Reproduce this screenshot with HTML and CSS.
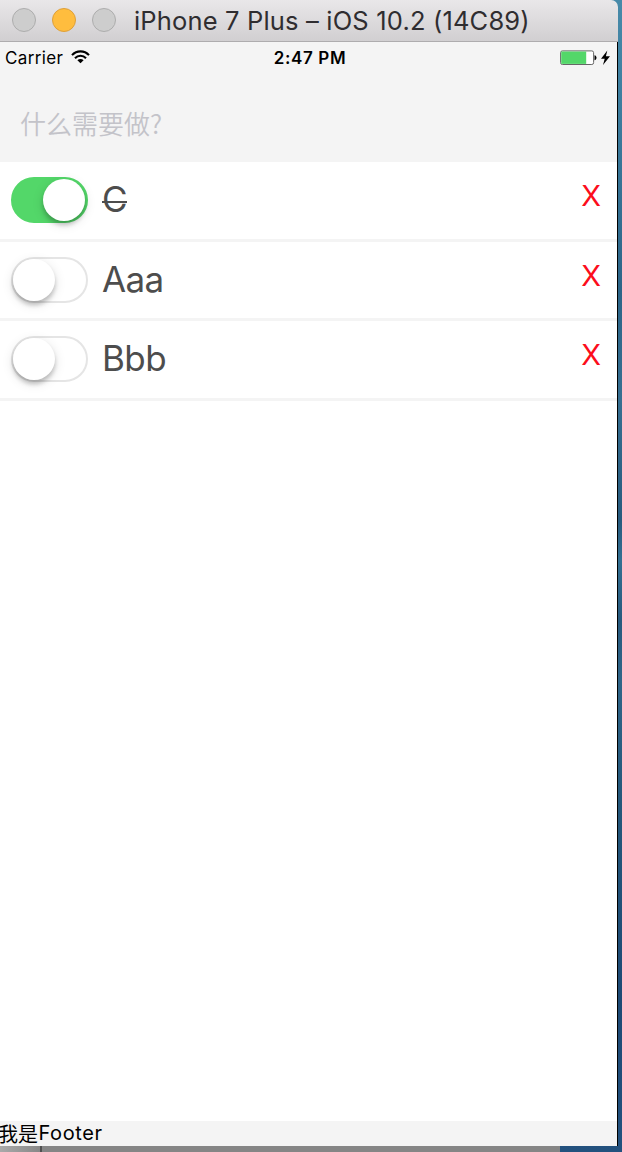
FILE: index.html
```html
<!DOCTYPE html>
<html lang="zh">
<head>
<meta charset="utf-8">
<title>Todos</title>
<link rel="stylesheet" href="styles.css">
</head>
<body>
<div class="desktop">
  <div class="window">
    <div class="titlebar">
      <span class="light"></span><span class="light minimize"></span><span class="light"></span>
      <span class="title">iPhone 7 Plus – iOS 10.2 (14C89)</span>
    </div>
    <div class="screen">
      <div class="status">
        <div class="carrier"><span>Carrier</span>
          <svg class="wifi" width="19" height="14" viewBox="0 0 19 14" fill="none" stroke="#000" stroke-width="2.1"><path d="M1 5.1C5.7.1 13.3.1 18 5.1M4 8.2c3-3.2 8-3.2 11 0"/><path d="M9.5 13.3 6.4 10.3c1.8-1.7 4.4-1.7 6.2 0z" fill="#000" stroke="none"/></svg>
        </div>
        <span class="time">2:47 PM</span>
        <svg class="battery" width="52" height="16" viewBox="0 0 52 16"><rect x=".6" y=".9" width="33" height="13.6" rx="1.8" fill="#fff" stroke="#666" stroke-width="1"/><path d="M1.2 1.5h25v12.4h-25z" fill="#53d769"/><path d="M34.5 5.2c2.7.5 2.7 4.6 0 5z"/><path d="M47.3.6 41 8.8h3.7L43 15l7-8.8h-4.1z"/></svg>
      </div>
      <div class="header"><span class="placeholder">什么需要做?</span></div>
      <div class="list">
        <div class="row"><span class="switch on"><span class="knob"></span></span><span class="label done">C</span><span class="remove">X</span></div>
        <div class="row"><span class="switch"><span class="knob"></span></span><span class="label">Aaa</span><span class="remove">X</span></div>
        <div class="row"><span class="switch"><span class="knob"></span></span><span class="label">Bbb</span><span class="remove">X</span></div>
      </div>
      <div class="footer"><span class="han">我是</span><span class="latin">Footer</span></div>
    </div>
  </div>
  <div class="behind"><span class="pane-left"></span><span class="pane"></span></div>
</div>
</body>
</html>
```
FILE: styles.css
```css
* { box-sizing: border-box; }
body { margin: 0; font-family: Inter, "Noto Sans CJK SC", sans-serif; }
.desktop {
  width: 622px; height: 1152px; overflow: hidden;
  background: linear-gradient(#478aa9 0, #3e7e9f 100px, #2d6588 290px, #376f91 400px, #285b7e 520px, #347092 560px, #285a7e 620px, #306588 680px, #25587b 800px, #1e4a75 1000px, #23517e 1152px);
}
.window { width: 618px; height: 1146px; display: flex; flex-direction: column; }
.titlebar {
  height: 42px; flex: none; display: flex; align-items: center; gap: 16px; padding: 0 0 2px 12px;
  background: linear-gradient(#e9e7e9, #d1cfd1); border-bottom: 1px solid #aeacae;
  border-radius: 0 7px 0 0;
}
.light { width: 24px; height: 24px; border-radius: 50%; background: #cdcdcd; border: 1px solid #adadad; }
.minimize { background: #ffbd3e; border-color: #dea03a; }
.title { margin: 2px 0 0 2px; font-size: 25.5px; line-height: 36px; letter-spacing: .17px; color: #2f2d30; white-space: nowrap; }
.screen { flex: 1; display: flex; flex-direction: column; background: #fff; border-right: 1px solid #000; }
.status {
  height: 33px; flex: none; display: grid; grid-template-columns: 1fr auto 1fr; align-items: center;
  padding: 0 5px 2px; background: #f4f4f4; font-size: 17px; color: #000;
}
.carrier { display: flex; align-items: center; gap: 8px; letter-spacing: .35px; }
.wifi { margin-top: -2px; }
.time { font-weight: 600; letter-spacing: .65px; margin-left: 3px; }
.battery { justify-self: end; }
.header { height: 87px; flex: none; display: flex; align-items: center; padding: 9px 20px 0; background: #f4f4f4; }
.placeholder { font-family: "Noto Sans CJK SC", sans-serif; font-weight: 350; font-size: 26px; line-height: 36px; color: #c3c3c9; }
.list { flex: 1; }
.row { height: 79.5px; display: flex; align-items: flex-start; padding: 15px 16px 0 11px; border-bottom: 3px solid #f4f4f4; }
.switch { width: 76.5px; height: 46px; flex: none; border: 2.5px solid #e5e5e5; border-radius: 24px; padding: 1px; display: flex; }
.knob { width: 42px; height: 42px; margin: -1px 0 0 -1px; border-radius: 50%; background: #fff; box-shadow: 0 4px 4px rgba(0,0,0,.2), 0 3px 12px rgba(0,0,0,.13); }
.on { background: #53d769; border-color: #53d769; justify-content: flex-end; }
.on .knob { margin: -1px 0 0; }
.label { margin: 0 auto 0 14.5px; font-size: 35px; line-height: 44px; color: #4d4d4d; letter-spacing: -.6px; }
.done { background: linear-gradient(#4d4d4d, #4d4d4d) 0 24px / 100% 2px no-repeat; }
.remove { font-size: 29px; line-height: 37.5px; color: #fc0d1b; }
.footer { height: 25.5px; flex: none; display: flex; align-items: center; background: #f4f4f4; font-size: 20px; line-height: 25px; color: #000; }
.han { font-family: "Noto Sans CJK SC", sans-serif; margin-left: -2px; }
.latin { margin-left: .5px; letter-spacing: .6px; }
.behind { height: 6px; width: 560px; display: flex; gap: 2px; background: #505050; }
.pane-left { width: 40px; background: linear-gradient(90deg, #aaa, #888); }
.pane { flex: 1; background: #858585; }
```
